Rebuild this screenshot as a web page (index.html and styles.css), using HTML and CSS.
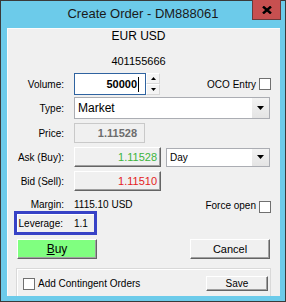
FILE: index.html
```html
<!DOCTYPE html>
<html lang="en">
<head>
  <meta charset="UTF-8">
  <title>Create Order</title>
  <link rel="stylesheet" href="styles.css">
</head>
<body>

<div class="window">
  <div class="titlebar">
    <div class="title">Create Order - DM888061</div>
    <div class="close">
      <svg width="10" height="8" viewBox="0 0 10 8"><path d="M1 0.5 L9 7.5 M9 0.5 L1 7.5" stroke="#000" stroke-width="2.4"/></svg>
    </div>
  </div>

  <div class="client">
    <div class="pair">EUR USD</div>
    <div class="account">401155666</div>

    <div class="row row-tall">
      <span class="label">Volume:</span>
      <div class="textbox volume focus"><span>50000</span><span class="caret"></span></div>
      <div class="spin">
        <span class="spin-btn"><svg width="5" height="3" viewBox="0 0 5 3"><path d="M0 3 L5 3 L2.5 0 Z" fill="#000"/></svg></span>
        <span class="spin-btn"><svg width="5" height="3" viewBox="0 0 5 3"><path d="M0 0 L5 0 L2.5 3 Z" fill="#000"/></svg></span>
      </div>
      <div class="check right">OCO Entry<span class="box"></span></div>
    </div>

    <div class="row row-type">
      <span class="label">Type:</span>
      <div class="select type">
        <span class="select-text">Market</span>
        <span class="drop"><svg width="7" height="4" viewBox="0 0 7 4"><path d="M0 0 L7 0 L3.5 4 Z" fill="#000"/></svg></span>
      </div>
    </div>

    <div class="row">
      <span class="label">Price:</span>
      <div class="readonly">1.11528</div>
    </div>

    <div class="row">
      <span class="label">Ask (Buy):</span>
      <div class="quote buy-price">1.11528</div>
      <div class="select day">
        <span class="select-text">Day</span>
        <span class="drop"><svg width="7" height="4" viewBox="0 0 7 4"><path d="M0 0 L7 0 L3.5 4 Z" fill="#000"/></svg></span>
      </div>
    </div>

    <div class="row">
      <span class="label">Bid (Sell):</span>
      <div class="quote sell-price">1.11510</div>
    </div>

    <div class="row row-margin">
      <span class="label">Margin:</span>
      <span class="value">1115.10 USD</span>
      <div class="check right force">Force open<span class="box"></span></div>
    </div>

    <div class="leverage">
      <span class="label">Leverage:</span>
      <span class="value">1.1</span>
    </div>

    <div class="buttons">
      <button class="btn buy"><u>B</u>uy</button>
      <button class="btn cancel">Cancel</button>
    </div>

    <div class="group">
      <div class="check"><span class="box"></span>Add Contingent Orders</div>
      <button class="btn save">Save</button>
    </div>
  </div>
</div>

</body>
</html>
```

FILE: styles.css
```css
body {
  margin: 0;
  font-family: "Liberation Sans", Arial, sans-serif;
  font-size: 10px;
  color: #000;
}

.window {
  width: 286px;
  height: 302px;
  box-sizing: border-box;
  border: 1px solid #3a3a3a;
  background: #6ccbea;
  display: flex;
  flex-direction: column;
}

.titlebar {
  height: 27px;
  flex: none;
  display: grid;
  grid-template-columns: 1fr auto 1fr;
}

.title {
  grid-column: 2;
  font-family: "Liberation Sans", Arial, sans-serif;
  font-size: 13px;
  line-height: 26px;
  color: #1a1a1a;
  white-space: nowrap;
}

.close {
  grid-column: 3;
  justify-self: end;
  align-self: start;
  width: 29px;
  height: 20px;
  margin: -1px 4px 0 0;
  box-sizing: border-box;
  background: #c75050;
  border: 1px solid #6b3a3a;
  border-top: none;
  display: flex;
  align-items: center;
  justify-content: center;
}

.client {
  flex: 1;
  margin: 0 5px 5px 6px;
  padding-right: 10px;
  background: #f0f0f0;
  box-shadow: inset 1px 1px 0 #fcfcfc;
  overflow: hidden;
}

.pair {
  margin-top: 1px;
  font-size: 12px;
  line-height: 14px;
  text-align: center;
}

.account {
  margin-top: 12px;
  font-size: 11px;
  line-height: 13px;
  text-align: center;
}

.row {
  display: flex;
  align-items: center;
  height: 20px;
  margin-top: 4px;
}

.row-tall {
  height: 22px;
  margin-top: 5px;
}

.row-type {
  height: 22px;
  margin-top: 2px;
}

.label {
  width: 57px;
  flex: none;
  text-align: right;
  margin-right: 10px;
}

.textbox,
.select,
.readonly,
.quote {
  box-sizing: border-box;
  height: 100%;
  display: flex;
  align-items: center;
}

.textbox {
  background: #fff;
  border: 1px solid #abadb3;
}

.volume {
  width: 72px;
  justify-content: flex-end;
  padding-right: 6px;
  font-size: 11px;
  font-weight: bold;
}

.focus {
  border-color: #2f63a0;
}

.caret {
  width: 1px;
  height: 15px;
  background: #000;
  margin-left: 1px;
}

.spin {
  width: 14px;
  height: 100%;
  display: flex;
  flex-direction: column;
}

.spin-btn {
  flex: 1;
  display: flex;
  align-items: center;
  justify-content: center;
  background: #f4f4f4;
  border: 1px solid #fff;
  border-right-color: #d8d8d8;
  border-bottom-color: #d8d8d8;
}

.check {
  display: flex;
  align-items: center;
  gap: 3px;
}

.right {
  margin-left: auto;
  margin-right: -1px;
}

.box {
  width: 12px;
  height: 12px;
  box-sizing: border-box;
  background: #fff;
  border: 1px solid #707070;
}

.select {
  background: #fff;
  border: 1px solid #abadb3;
  justify-content: space-between;
}

.select-text {
  padding-left: 3px;
}

.type {
  flex: 1;
  font-size: 12px;
}

.day {
  width: 104px;
  height: 19px;
  margin-left: 5px;
}

.drop {
  width: 17px;
  height: 100%;
  display: flex;
  align-items: center;
  justify-content: center;
  background: linear-gradient(#f3f3f3, #e4e4e4);
}

.readonly {
  width: 71px;
  justify-content: flex-end;
  padding-right: 7px;
  border: 1px solid #c9c9c9;
  font-size: 11px;
  font-weight: bold;
  color: #6d6d6d;
}

.quote {
  width: 87px;
  justify-content: flex-end;
  padding-right: 3px;
  border: 1px solid;
  border-color: #fff #646464 #646464 #fff;
  box-shadow: inset -1px -1px 0 #a0a0a0;
  font-size: 11px;
}

.buy-price {
  color: #3cb43c;
}

.sell-price {
  color: #e41b23;
}

.row-margin {
  height: 12px;
  margin-top: 8px;
  align-items: flex-start;
  line-height: 12px;
}

.force .box {
  margin-top: 2px;
}

.leverage {
  width: 83px;
  height: 24px;
  box-sizing: border-box;
  margin-left: 7px;
  border: 3px solid #3742c6;
  box-shadow: inset 1px 1px 0 #fff;
  display: flex;
  align-items: center;
}

.leverage .label {
  width: 46px;
  margin-right: 11px;
}

.buttons {
  display: flex;
  justify-content: space-between;
  margin-top: 4px;
  padding-left: 10px;
}

.btn {
  box-sizing: border-box;
  width: 80px;
  height: 20px;
  padding: 0;
  font-family: "Liberation Sans", Arial, sans-serif;
  color: #000;
  background: #f0f0f0;
  border: 1px solid;
  border-color: #fff #646464 #646464 #fff;
  box-shadow: inset -1px -1px 0 #a0a0a0;
}

.buy {
  background: #80ff80;
  font-size: 12px;
}

.cancel {
  font-size: 11px;
}

.group {
  height: 40px;
  margin: 9px -1px 0 9px;
  padding: 7px 2px 0 6px;
  box-sizing: border-box;
  border: 1px solid #d9d9d9;
  box-shadow: inset 1px 1px 0 #fff;
  display: flex;
  align-items: flex-start;
}

.group .check {
  height: 15px;
}

.save {
  width: 62px;
  height: 15px;
  margin-left: auto;
  font-size: 10px;
}
```
